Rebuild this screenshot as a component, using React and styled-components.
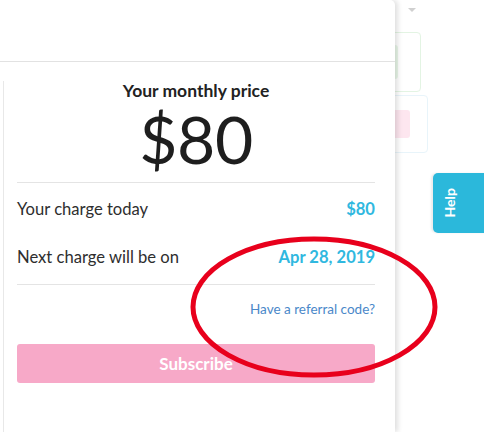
import React from "react";
import styled, { createGlobalStyle } from "styled-components";

const Global = createGlobalStyle`
  html, body { margin: 0; padding: 0; background: #fff; }
  body { font-family: Lato, "Open Sans", Arial, sans-serif; overflow: hidden; }
  * { box-sizing: border-box; }
`;

const Page = styled.div`
  position: relative;
  display: flex;
  width: 484px;
  height: 432px;
  overflow: hidden;
  background: #fff;
`;

const Modal = styled.div`
  position: relative;
  z-index: 2;
  flex: 0 0 395px;
  height: 432px;
  background: #fff;
  border-radius: 0 5px 0 0;
  box-shadow: 3px 0 5px rgba(0, 0, 0, 0.12);
  display: flex;
  flex-direction: column;
`;

const Header = styled.div`
  height: 62px;
  border-bottom: 1px solid #e2e2e2;
`;

const Body = styled.div`
  flex: 1;
  padding: 19px 0 0 3px;
  display: flex;
`;

const Panel = styled.div`
  flex: 1;
  border-left: 1px solid #e8e8e8;
  padding: 0 20px 0 13px;
  display: flex;
  flex-direction: column;
`;

const Title = styled.div`
  text-align: center;
  font-weight: 700;
  font-size: 17.5px;
  line-height: 20px;
  color: #222;
`;

const Price = styled.div`
  text-align: center;
  font-size: 66px;
  line-height: 70px;
  color: #1e1e1e;
  margin-top: 3px;
  letter-spacing: -0.5px;
`;

const Divider = styled.div`
  height: 1px;
  background: #e4e4e4;
  margin-top: ${(p) => p.$mt || 0}px;
`;

const Row = styled.div`
  display: flex;
  justify-content: space-between;
  align-items: center;
  height: 48px;
  padding-top: 4px;
  font-size: 16.6px;
  color: #2e2e2e;
`;

const Value = styled.span`
  font-weight: 700;
  color: #30b8df;
`;

const Referral = styled.a`
  align-self: flex-end;
  margin-top: 16px;
  font-size: 13.5px;
  line-height: 16px;
  color: #4a88c9;
  text-decoration: none;
`;

const Button = styled.button`
  margin-top: 27px;
  height: 39px;
  width: 100%;
  border: none;
  border-radius: 3px;
  background: #f7a9c8;
  color: #fff;
  font-family: inherit;
  font-weight: 700;
  font-size: 17px;
`;

const Backdrop = styled.div`
  flex: 1;
  display: flex;
  flex-direction: column;
  padding-top: 8px;
  opacity: 0.55;
`;

const Caret = styled.div`
  margin-left: 13px;
  width: 0;
  height: 0;
  border-left: 4px solid transparent;
  border-right: 4px solid transparent;
  border-top: 4px solid #aaa;
`;

const GhostCard = styled.div`
  margin-left: -10px;
  margin-top: ${(p) => p.$mt}px;
  width: ${(p) => p.$w}px;
  height: ${(p) => p.$h}px;
  border: 1px solid ${(p) => p.$border};
  border-radius: 4px;
  display: flex;
  align-items: center;
  padding-left: 4px;
`;

const GhostFill = styled.div`
  width: ${(p) => p.$w}px;
  height: ${(p) => p.$h}px;
  border-radius: 3px;
  background: ${(p) => p.$bg};
`;

const HelpTab = styled.div`
  position: absolute;
  z-index: 3;
  left: 433px;
  top: 173px;
  width: 56px;
  height: 60px;
  background: #2bb8db;
  border-radius: 5px 0 0 5px;
  box-shadow: -2px 0 2px rgba(0, 0, 0, 0.08);
  display: flex;
  align-items: center;
  padding-left: 2px;
`;

const HelpText = styled.span`
  display: block;
  transform: rotate(-90deg);
  color: #fff;
  font-family: Lato, Arial, sans-serif;
  font-weight: 700;
  font-size: 14px;
  width: 28px;
  text-align: center;
`;

const Annotation = styled.svg`
  position: absolute;
  z-index: 4;
  left: 0;
  top: 0;
  pointer-events: none;
`;

export default function App() {
  return (
    <>
      <Global />
      <Page>
        <Modal>
          <Header />
          <Body>
            <Panel>
              <Title>Your monthly price</Title>
              <Price>$80</Price>
              <Divider $mt={8} />
              <Row>
                <span>Your charge today</span>
                <Value>$80</Value>
              </Row>
              <Row>
                <span>Next charge will be on</span>
                <Value>Apr 28, 2019</Value>
              </Row>
              <Divider $mt={5} />
              <Referral href="#">Have a referral code?</Referral>
              <Button>Subscribe</Button>
            </Panel>
          </Body>
        </Modal>
        <Backdrop>
          <Caret />
          <GhostCard $mt={20} $w={36} $h={60} $border="#cdeccd">
            <GhostFill $w={8} $h={34} $bg="#d8f2d8" />
          </GhostCard>
          <GhostCard $mt={3} $w={43} $h={58} $border="#d6ecf7">
            <GhostFill $w={20} $h={28} $bg="#fcd3e3" />
          </GhostCard>
        </Backdrop>
        <HelpTab>
          <HelpText>Help</HelpText>
        </HelpTab>
        <Annotation width="484" height="432" viewBox="0 0 484 432">
          <ellipse cx="314" cy="307" rx="121" ry="68" fill="none" stroke="#e8001c" strokeWidth="5" />
        </Annotation>
      </Page>
    </>
  );
}
